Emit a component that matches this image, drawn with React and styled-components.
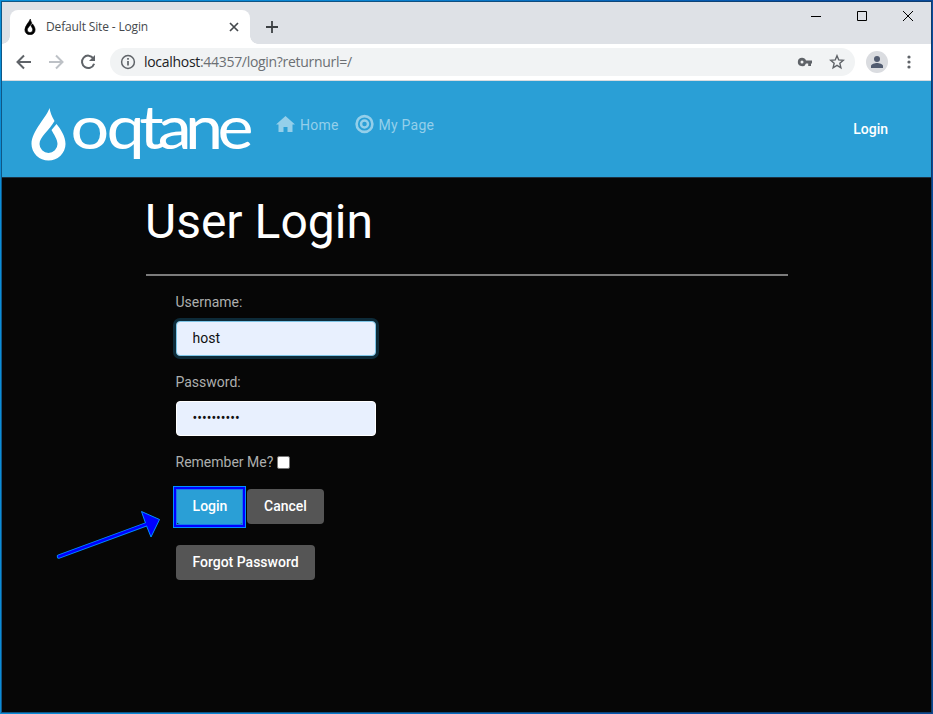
import React from 'react';
import styled, { createGlobalStyle, css } from 'styled-components';

const GlobalStyle = createGlobalStyle`
  * { box-sizing: border-box; }
  body { margin: 0; overflow: hidden; }
  #root { height: 714px; }
  button, input { font: inherit; }
`;

const Desktop = styled.div`
  width: 933px;
  height: 714px;
  padding: 1px;
  background: linear-gradient(100deg, #0a8fd8 0%, #0a84d2 35%, #0650a8 75%, #0c4890 100%);
`;

const Window = styled.div`
  position: relative;
  width: 931px;
  height: 712px;
  border: 1px solid rgba(20, 50, 80, 0.6);
  background: #060606;
  background-clip: padding-box;
  font: 14px/21px Roboto, sans-serif;
  color: #adafae;
`;

const TitleBar = styled.header`
  display: flex;
  align-items: flex-end;
  height: 42px;
  padding-left: 8px;
  background: #dee1e6;
`;

const Tab = styled.div`
  position: relative;
  display: flex;
  align-items: center;
  width: 240px;
  height: 34px;
  padding: 0 10px 0 14px;
  border-radius: 8px 8px 0 0;
  background: #fff;
  &::before,
  &::after {
    content: '';
    position: absolute;
    bottom: 0;
    width: 8px;
    height: 8px;
  }
  &::before {
    left: -8px;
    background: radial-gradient(circle at 0 0, transparent 7.5px, #fff 8px);
  }
  &::after {
    right: -8px;
    background: radial-gradient(circle at 100% 0, transparent 7.5px, #fff 8px);
  }
`;

const TabTitle = styled.span`
  margin-left: 10px;
  flex: 1;
  color: #45494d;
  font: 12px/16px 'Open Sans', sans-serif;
  letter-spacing: -0.15px;
  white-space: nowrap;
`;

const NewTab = styled.div`
  display: flex;
  align-self: flex-end;
  margin: 0 0 11px 16px;
`;

const WindowControls = styled.div`
  display: flex;
  align-self: flex-start;
  margin: 8px 17px 0 auto;
  gap: 34px;
`;

const Toolbar = styled.div`
  display: flex;
  align-items: center;
  height: 37px;
  padding: 0 14px;
  border-bottom: 1px solid #d8dce0;
  background: #fff;
`;

const NavButtons = styled.div`
  display: flex;
  gap: 16px;
  width: 94px;
`;

const AddressBar = styled.div`
  display: flex;
  align-items: center;
  width: 745px;
  height: 28px;
  padding: 0 10px 0 9px;
  border-radius: 14px;
  background: #f1f3f4;
`;

const Url = styled.span`
  flex: 1;
  margin-left: 7px;
  color: #6b6f73;
  font: 14px/20px 'Open Sans', sans-serif;
  letter-spacing: -0.3px;
  b { color: #202124; font-weight: 400; }
`;

const AddressIcons = styled.div`
  display: flex;
  align-items: center;
  gap: 16px;
`;

const Avatar = styled.div`
  display: flex;
  align-items: center;
  justify-content: center;
  width: 22px;
  height: 22px;
  margin: 0 19px 0 11px;
  border-radius: 50%;
  background: #dadce0;
`;

const SiteBar = styled.nav`
  display: flex;
  align-items: flex-start;
  height: 97px;
  padding-left: 28px;
  border-bottom: 1px solid #1c3040;
  background: #2a9fd6;
`;

const Logo = styled.svg`
  display: block;
  margin-top: 14px;
  flex: none;
`;

const Menu = styled.div`
  display: flex;
  gap: 16px;
  margin: 34px 0 0 16px;
`;

const MenuItem = styled.a`
  display: flex;
  align-items: center;
  height: 21px;
  color: #94cfea;
  font-size: 14px;
  letter-spacing: 0.23px;
  svg { margin: -4px 5px 0 0; }
`;

const LoginLink = styled.a`
  margin: 38px 43px 0 auto;
  color: #fff;
  font-weight: 500;
`;

const Content = styled.main`
  width: 642px;
  margin-left: 144px;
  padding-top: 15px;
`;

const Heading = styled.h1`
  margin: 0 0 0 -1px;
  height: 81px;
  color: #fff;
  font-size: 48px;
  font-weight: 400;
  line-height: 57px;
`;

const Rule = styled.div`
  height: 2px;
  background: #7b7b7b;
`;

const Form = styled.form`
  display: flex;
  flex-direction: column;
  align-items: flex-start;
  padding: 16px 0 0 30px;
`;

const Label = styled.label`
  display: flex;
  align-items: center;
  height: 21px;
  margin-left: -0.5px;
  white-space: nowrap;
`;

const Field = styled.input`
  width: 200px;
  height: 35px;
  margin: 8px 0 16px;
  padding: 0 15.5px 1px;
  border: 1px solid #fff;
  border-radius: 4px;
  outline: 0;
  background: #e8f0fe;
  color: #111;
  ${({ $active }) => $active && css`
    border-color: #7cc4e6;
    box-shadow: 0 0 0 3px #0d2b39;
  `}
`;

const Check = styled.span`
  width: 13px;
  height: 13px;
  margin: 0 0 0 3.5px;
  border: 1px solid #767676;
  border-radius: 2px;
  background: #fff;
`;

const ButtonRow = styled.div`
  display: flex;
  gap: 3px;
  margin: 16px 0 21px;
`;

const Button = styled.button`
  width: ${({ $width }) => $width}px;
  height: 35px;
  padding: 0 0 1px;
  border: 0;
  border-radius: 4px;
  background: ${({ $primary }) => ($primary ? '#2a9fd6' : '#555')};
  color: #fff;
  font-weight: 500;
  white-space: nowrap;
`;

const Highlighted = styled.div`
  position: relative;
  &::after {
    content: '';
    position: absolute;
    inset: -3px -2px -4px -3px;
    border: 3px solid #0000ff;
    outline: 1px solid #0090ff;
    outline-offset: -1px;
  }
  &::before {
    content: '';
    position: absolute;
    z-index: 1;
    inset: 0 1px -1px 0;
    border: 1px solid #1478f0;
  }
`;

const Arrow = styled.svg`
  position: absolute;
  left: 48px;
  top: 498px;
`;

const DROP = 'M18 0C16 8 0 23 0 36A17 16.5 0 0 0 34 36C34 28 29 21 25 16L20 22C22 26 26 31 26 36A9 9 0 0 1 8 36C8 29 18 22 23 13C20 8 19 5 18 0Z';

function Wordmark() {
  return (
    <Logo width="230" height="78" viewBox="0 -10 230 78" fill="#fff">
      <path transform="translate(1.500 3)" d={DROP} />
      <text
        transform="scale(1.12 1)"
        x="36.2 68.3 97.5 114 138.5 167.5"
        y="44"
        fontFamily="Lato, sans-serif"
        fontSize="61"
      >oqtane</text>
    </Logo>
  );
}

const line = { fill: 'none', stroke: '#5f6368', strokeWidth: 2 };

export default function App() {
  return (
    <Desktop>
      <GlobalStyle />
      <Window>
        <TitleBar>
          <Tab>
            <svg width="12" height="16" viewBox="0 0 34 53"><path d={DROP} fill="#000" stroke="#000" strokeWidth="2" /></svg>
            <TabTitle>Default Site - Login</TabTitle>
            <svg width="12" height="12" viewBox="0 0 12 12"><path d="M2 2l8 8M10 2l-8 8" stroke="#45494d" strokeWidth="1.7" /></svg>
          </Tab>
          <NewTab>
            <svg width="12" height="12" viewBox="0 0 12 12"><path d="M6 0v12M0 6h12" stroke="#3c4043" strokeWidth="1.8" /></svg>
          </NewTab>
          <WindowControls>
            <svg width="12" height="12"><path d="M1 6.5h10" stroke="#000" /></svg>
            <svg width="12" height="12"><path d="M1.500 1.500h9v9h-9z" fill="none" stroke="#000" /></svg>
            <svg width="12" height="12"><path d="M1 1l10 10M11 1L1 11" stroke="#000" /></svg>
          </WindowControls>
        </TitleBar>
        <Toolbar>
          <NavButtons>
            <svg width="16" height="16" viewBox="0 0 16 16"><path d="M15 8H2M8 1.500L1.500 8L8 14.500" {...line} /></svg>
            <svg width="16" height="16" viewBox="0 0 16 16"><path d="M1 8h13M8 1.500L14.500 8L8 14.500" {...line} stroke="#bdc1c6" /></svg>
            <svg width="16" height="16" viewBox="0 0 16 16"><path d="M13.300 4.300A6.200 6.200 0 1 0 14.100 9.700" {...line} /><path d="M15 1v6H9z" fill="#5f6368" /></svg>
          </NavButtons>
          <AddressBar>
            <svg width="18" height="18" viewBox="0 0 18 18"><circle cx="9" cy="9" r="6.400" {...line} strokeWidth="1.500" /><path d="M9 8v4.500M9 5v1.700" stroke="#5f6368" strokeWidth="1.700" /></svg>
            <Url><b>localhost</b>:44357/login?returnurl=/</Url>
            <AddressIcons>
              <svg width="16" height="10" viewBox="0 0 16 10"><path fillRule="evenodd" fill="#5f6368" d="M5 0.800a4.200 4.200 0 1 0 4 5.600h2.200V9H14V6.400h1V3.600H9A4.200 4.200 0 0 0 5 .8zM5 3.500a1.500 1.500 0 1 1 0 3a1.500 1.500 0 0 1 0-3z" /></svg>
              <svg width="16" height="16" viewBox="0 0 16 16"><path d="M8 1.700l1.750 4.200 4.550.4-3.450 3 1.050 4.450L8 11.400l-3.900 2.350L5.150 9.300 1.700 6.300l4.550-.4z" {...line} strokeWidth="1.400" /></svg>
            </AddressIcons>
          </AddressBar>
          <Avatar>
            <svg width="14" height="14" viewBox="0 0 14 14" fill="#525c70"><circle cx="7" cy="4" r="3" /><path d="M1 13v-2c0-2 4-3 6-3s6 1 6 3v2z" /></svg>
          </Avatar>
          <svg width="4" height="14" viewBox="0 0 4 14" fill="#5f6368"><circle cx="2" cy="2" r="1.600" /><circle cx="2" cy="7" r="1.600" /><circle cx="2" cy="12" r="1.600" /></svg>
        </Toolbar>
        <SiteBar>
          <Wordmark />
          <Menu>
            <MenuItem>
              <svg width="19" height="18" viewBox="0 0 19 18" fill="currentColor"><path d="M9.500 1L19 9.500h-2.500V17H11.500v-5h-4v5H2.500V9.500H0L9.500 1z" /></svg>
              Home
            </MenuItem>
            <MenuItem>
              <svg width="19" height="20" viewBox="0 0 19 20" fill="none" stroke="currentColor"><circle cx="9.500" cy="10" r="7.900" strokeWidth="2.600" /><circle cx="9.500" cy="10" r="3.500" strokeWidth="2.500" /></svg>
              My Page
            </MenuItem>
          </Menu>
          <LoginLink>Login</LoginLink>
        </SiteBar>
        <Content>
          <Heading>User Login</Heading>
          <Rule />
          <Form>
            <Label>Username:</Label>
            <Field $active defaultValue="host" />
            <Label>Password:</Label>
            <Field type="password" defaultValue="password12" />
            <Label>Remember Me?<Check /></Label>
            <ButtonRow>
              <Highlighted><Button type="button" $primary $width={68}>Login</Button></Highlighted>
              <Button type="button" $width={77}>Cancel</Button>
            </ButtonRow>
            <Button type="button" $width={139}>Forgot Password</Button>
          </Form>
        </Content>
        <Arrow width="120" height="70" viewBox="50 500 120 70">
          <path d="M59 556.500L146 524.500" stroke="#0090ff" strokeWidth="4.500" strokeLinecap="round" />
          <path d="M141.500 511.500L159.500 519.500L151 537L146 524.500Z" fill="#0000ff" stroke="#0090ff" />
          <path d="M59 556.500L147 524" stroke="#0000ff" strokeWidth="2.500" strokeLinecap="round" />
        </Arrow>
      </Window>
    </Desktop>
  );
}
